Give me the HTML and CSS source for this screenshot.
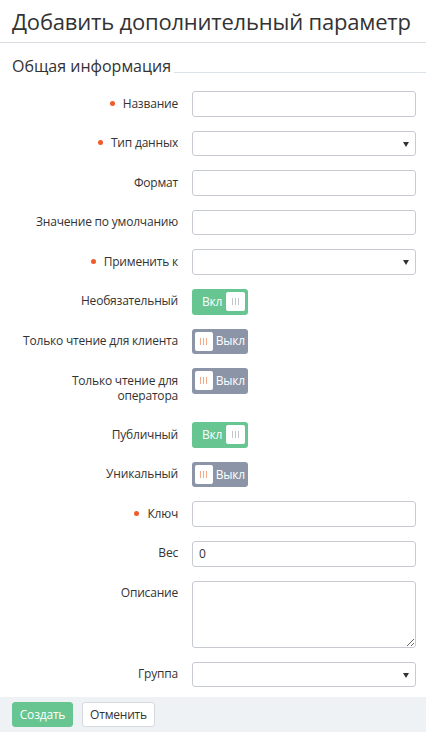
FILE: index.html
```html
<!DOCTYPE html>
<html lang="ru">
<head>
<meta charset="utf-8">
<title>Добавить дополнительный параметр</title>
<link rel="stylesheet" href="styles.css">
</head>
<body>
<h1 class="page-title">Добавить дополнительный параметр</h1>
<div class="section-head">
  <span class="section-title">Общая информация</span>
  <span class="section-line"></span>
</div>
<form class="form">
  <div class="row">
    <label class="lbl req">Название</label>
    <input class="input" type="text">
  </div>
  <div class="row">
    <label class="lbl req">Тип данных</label>
    <div class="select"><span class="select-box"></span></div>
  </div>
  <div class="row">
    <label class="lbl">Формат</label>
    <input class="input" type="text">
  </div>
  <div class="row">
    <label class="lbl">Значение по умолчанию</label>
    <input class="input" type="text">
  </div>
  <div class="row">
    <label class="lbl req">Применить к</label>
    <div class="select"><span class="select-box"></span></div>
  </div>
  <div class="row">
    <label class="lbl">Необязательный</label>
    <div class="toggle on"><span class="toggle-text">Вкл</span><span class="knob"><i></i><i></i><i></i></span></div>
  </div>
  <div class="row">
    <label class="lbl">Только чтение для клиента</label>
    <div class="toggle off"><span class="knob"><i></i><i></i><i></i></span><span class="toggle-text">Выкл</span></div>
  </div>
  <div class="row">
    <label class="lbl">Только чтение для оператора</label>
    <div class="toggle off"><span class="knob"><i></i><i></i><i></i></span><span class="toggle-text">Выкл</span></div>
  </div>
  <div class="row">
    <label class="lbl">Публичный</label>
    <div class="toggle on"><span class="toggle-text">Вкл</span><span class="knob"><i></i><i></i><i></i></span></div>
  </div>
  <div class="row">
    <label class="lbl">Уникальный</label>
    <div class="toggle off"><span class="knob"><i></i><i></i><i></i></span><span class="toggle-text">Выкл</span></div>
  </div>
  <div class="row">
    <label class="lbl req">Ключ</label>
    <input class="input" type="text">
  </div>
  <div class="row">
    <label class="lbl">Вес</label>
    <input class="input" type="text" value="0">
  </div>
  <div class="row">
    <label class="lbl">Описание</label>
    <textarea class="textarea"></textarea>
  </div>
  <div class="row">
    <label class="lbl">Группа</label>
    <div class="select"><span class="select-box"></span></div>
  </div>
</form>
<div class="footer">
  <button class="btn btn-primary" type="button">Создать</button>
  <button class="btn btn-default" type="button">Отменить</button>
</div>
</body>
</html>
```

FILE: styles.css
```css
html, body {
  margin: 0;
  padding: 0;
  background: #fff;
}
body {
  font-family: "Open Sans", "Noto Sans", sans-serif;
  color: #333;
  font-size: 12px;
}
.page-title {
  margin: 0;
  padding: 5px 12px 4px;
  font-size: 22px;
  line-height: 33px;
  font-weight: 400;
  color: #333;
  border-bottom: 1px solid #d9dde3;
  white-space: nowrap;
  letter-spacing: -0.2px;
}
.section-head {
  display: flex;
  align-items: flex-start;
  margin: 12px 0 14px 12px;
}
.section-title {
  font-size: 16px;
  line-height: 22px;
  color: #333;
}
.section-line {
  flex: 1;
  height: 1px;
  background: #dce2e9;
  margin-top: 17px;
  margin-left: 3px;
}
.form {
  display: flex;
  flex-direction: column;
  gap: 14px;
  padding: 0 10px 0 12px;
}
.row {
  display: grid;
  grid-template-columns: 166px 1fr;
  column-gap: 14px;
  align-items: start;
}
.lbl {
  text-align: right;
  line-height: 15px;
  padding: 4.5px 0 5.5px;
  color: #333;
  letter-spacing: -0.2px;
}
.lbl.req::before {
  content: "";
  display: inline-block;
  width: 5px;
  height: 5px;
  border-radius: 50%;
  background: #f15a2b;
  margin-right: 8px;
  vertical-align: 2px;
}
.input, .select-box, .textarea {
  box-sizing: border-box;
  width: 100%;
  border: 1px solid #c7cbd1;
  border-radius: 3px;
  background: #fff;
  font-family: inherit;
  font-size: 12px;
  color: #333;
  margin: 0;
}
.input {
  height: 25.6px;
  padding: 0 6px;
  outline: none;
}
.select {
  position: relative;
}
.select-box {
  display: block;
  height: 25.6px;
}
.select::after {
  content: "";
  position: absolute;
  right: 7px;
  top: 11px;
  border-left: 3px solid transparent;
  border-right: 3px solid transparent;
  border-top: 5px solid #333;
}
.textarea {
  display: block;
  height: 67px;
  resize: vertical;
  padding: 4px 6px;
}
.toggle {
  box-sizing: border-box;
  width: 56px;
  height: 25.6px;
  border-radius: 3px;
  display: flex;
  align-items: center;
  padding: 0 3px;
  color: #fff;
  font-size: 12px;
  line-height: 1;
  letter-spacing: -0.2px;
}
.toggle.on {
  background: #66c591;
  justify-content: space-between;
  padding-left: 10px;
}
.toggle.off {
  background: #8b95a7;
  gap: 3px;
}
.knob {
  width: 19px;
  height: 19px;
  background: #fff;
  border-radius: 2px;
  display: flex;
  align-items: center;
  justify-content: center;
  gap: 2px;
}
.knob i {
  display: block;
  width: 1px;
  height: 7px;
  background: #c2c6cc;
}
.toggle.off .knob i {
  background: #f2ab86;
}
.footer {
  margin-top: 10px;
  background: #eef2f5;
  padding: 5px 12px;
  display: flex;
  gap: 9px;
}
.btn {
  box-sizing: border-box;
  height: 25px;
  border-radius: 3px;
  font-family: inherit;
  font-size: 12px;
  padding: 0 6px;
  margin: 0;
  line-height: 23px;
  letter-spacing: -0.2px;
}
.btn-primary {
  background: #66c591;
  border: 1px solid #66c591;
  color: #fff;
  width: 61px;
}
.btn-default {
  background: #fff;
  border: 1px solid #d6dadf;
  color: #333;
  width: 73px;
}
```
